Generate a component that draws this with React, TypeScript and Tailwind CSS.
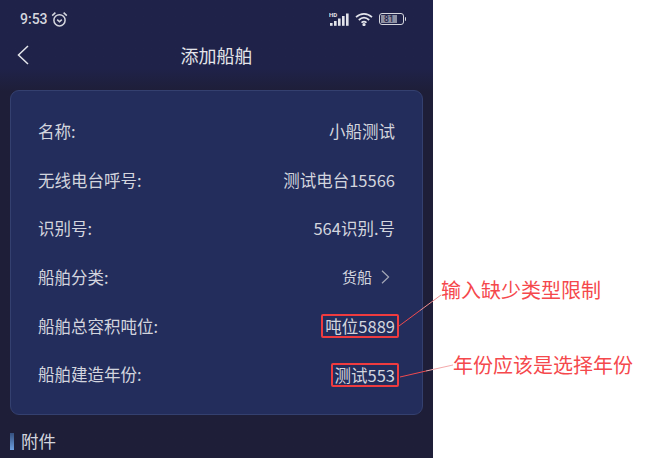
const rows = [
  { label: "名称:", value: "小船测试" },
  { label: "无线电台呼号:", value: "测试电台15566" },
  { label: "识别号:", value: "564识别.号" },
  { label: "船舶分类:", value: "货船", arrow: true },
  { label: "船舶总容积吨位:", value: "吨位5889", boxed: true },
  { label: "船舶建造年份:", value: "测试553", boxed: true },
];

const font = "font-['Noto_Sans_CJK_SC','Noto_Sans',sans-serif]";

function StatusBar() {
  return (
    <div className="flex h-[37px] items-center justify-between pl-5 pr-[27px] pt-[1px]">
      <div className="flex items-center gap-[3px]">
        <span className="font-['Roboto',sans-serif] text-[14px] font-medium text-[#d5d6de]">9:53</span>
        <svg width="17" height="17" viewBox="0 0 17 17" fill="none" stroke="#d5d6de" strokeWidth="1.5">
          <circle cx="8.5" cy="9.3" r="5.6" />
          <path d="M6.2 8.6l2.3 2.2 2.3-2.2" />
          <path d="M1.2 4.6L4.4 1.6M15.8 4.6L12.6 1.6" />
        </svg>
      </div>
      <div className="flex items-center gap-[5px]">
        <svg width="21" height="14" viewBox="0 0 21 14" fill="#e2e3ea">
          <text x="0" y="5" fontSize="6" fontWeight="700" fontFamily="Roboto, sans-serif">HD</text>
          <rect x="1" y="11" width="2.6" height="2.8" />
          <rect x="5" y="9" width="2.6" height="4.8" />
          <rect x="9" y="6.5" width="2.6" height="7.3" />
          <rect x="13" y="4" width="2.6" height="9.8" />
          <rect x="17" y="1.5" width="2.6" height="12.3" />
        </svg>
        <svg width="19" height="14" viewBox="0 0 19 14" fill="none" stroke="#e2e3ea" strokeWidth="1.7">
          <path d="M1 5.2C5.8 .8 12.2 .8 17 5.2" />
          <path d="M3.8 8C7 5.2 11 5.2 14.2 8" />
          <path d="M6.5 10.6c1.8-1.5 3.2-1.5 5 0" />
          <circle cx="9" cy="12.6" r=".8" fill="#e2e3ea" />
        </svg>
        <div className="flex items-center gap-[1px]">
          <div className="flex h-[12px] w-[25px] items-center rounded-[3px] border-[1.5px] border-[#d5d6de] p-[1px]">
            <div className="flex h-full w-[80%] items-center justify-center bg-[#8d90a2] font-['Roboto',sans-serif] text-[8.5px] font-medium leading-none text-[#1f2248]">
              81
            </div>
          </div>
          <div className="h-[4px] w-[1.5px] rounded-r-sm bg-[#d5d6de]" />
        </div>
      </div>
    </div>
  );
}

function Row({ label, value, arrow, boxed }: (typeof rows)[number]) {
  return (
    <div className="flex h-[48.7px] items-center justify-between">
      <span className="text-[16.5px] text-[#d3d5de]">{label}</span>
      <div className="flex items-center gap-[9px]">
        <span
          className={
            boxed
              ? "-mr-[4px] rounded-[2px] border-2 border-[#ef3b3f] px-[2px] text-[16.5px] leading-[20px] text-[#d3d5de]"
              : arrow
                ? "text-[15px] text-[#d3d5de]"
                : "text-[16.5px] text-[#d3d5de]"
          }
        >
          {value}
        </span>
        {arrow && (
          <svg width="9" height="14" viewBox="0 0 9 14" fill="none" stroke="#a4a7b6" strokeWidth="1.2" className="mr-[5px]">
            <path d="M1 .8L7.6 7 1 13.2" />
          </svg>
        )}
      </div>
    </div>
  );
}

export default function App() {
  return (
    <div className={`relative h-[458px] w-[665px] overflow-hidden bg-white ${font}`}>
      <div className="h-full w-[433px] bg-gradient-to-b from-[#1f2249] from-15% to-[#1e1e38] to-20%">
        <StatusBar />
        <div className="relative flex h-[36px] items-center justify-center">
          <svg width="12" height="20" viewBox="0 0 12 20" fill="none" stroke="#e4e5ea" strokeWidth="1.5" className="absolute left-[17px]">
            <path d="M11 1L1.5 10 11 19" />
          </svg>
          <span className="text-[18px] text-[#e4e5ea]">添加船舶</span>
        </div>
        <div className="mx-[10px] mt-[17px] h-[325px] rounded-[9px] border border-[#34406f] bg-[#232d5c] pl-[27px] pr-[27px] pt-[16px]">
          {rows.map((r) => (
            <Row key={r.label} {...r} />
          ))}
        </div>
        <div className="mt-[16px] flex items-center gap-[7px] pl-[10px]">
          <div className="h-[17px] w-[4px] bg-gradient-to-b from-[#35507f] to-[#6d9fe0]" />
          <span className="text-[17.5px] leading-[20px] text-[#d3d5de]">附件</span>
        </div>
      </div>

      {/* annotations */}
      <svg className="absolute left-0 top-0" width="665" height="458" fill="none" strokeWidth="1">
        <path d="M399 326L420 310.5" stroke="#ef4a4e" />
        <path d="M420 310.5L441 295" stroke="#f08f91" />
        <path d="M400 377L426 371" stroke="#ef4a4e" />
        <path d="M426 371L453 365" stroke="#f4a9ab" />
      </svg>
      <span className="absolute left-[441px] top-[276px] text-[20px] leading-[28px] text-[#f5484c]">输入缺少类型限制</span>
      <span className="absolute left-[453px] top-[351px] text-[20px] leading-[28px] text-[#f5484c]">年份应该是选择年份</span>
    </div>
  );
}
